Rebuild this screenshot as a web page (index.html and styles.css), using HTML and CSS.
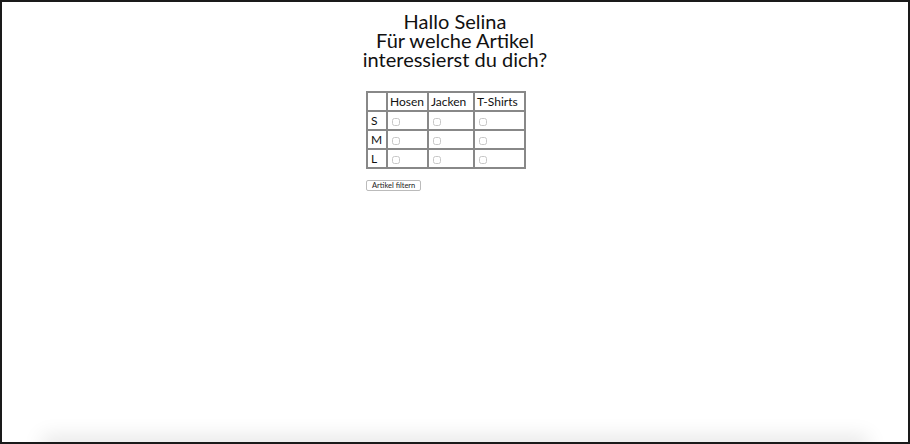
FILE: index.html
```html
<!DOCTYPE html>
<html lang="de">
<head>
  <meta charset="UTF-8" />
  <meta name="viewport" content="width=device-width, initial-scale=1.0"/>
  <title>Artikel</title>
  <link rel="stylesheet" href="styles.css">
</head>
<body>
  <div class="frame">
    <h1>Hallo Selina<br>Für welche Artikel<br>interessierst du dich?</h1>
    <form class="filter">
      <table class="sizes">
        <tr>
          <th class="size"></th>
          <th class="c1">Hosen</th>
          <th class="c2">Jacken</th>
          <th class="c3">T-Shirts</th>
        </tr>
        <tr>
          <td class="size">S</td>
          <td><input type="checkbox"></td>
          <td><input type="checkbox"></td>
          <td><input type="checkbox"></td>
        </tr>
        <tr>
          <td class="size">M</td>
          <td><input type="checkbox"></td>
          <td><input type="checkbox"></td>
          <td><input type="checkbox"></td>
        </tr>
        <tr>
          <td class="size">L</td>
          <td><input type="checkbox"></td>
          <td><input type="checkbox"></td>
          <td><input type="checkbox"></td>
        </tr>
      </table>
      <button type="button" class="btn">Artikel filtern</button>
    </form>
    <div class="shade"></div>
  </div>
</body>
</html>
```

FILE: styles.css
```css
html, body {
  margin: 0; padding: 0; background: #fff;
}
body {
  font-family: Lato, "DejaVu Sans", sans-serif; color: #111;
}
.frame {
  height: 444px; box-sizing: border-box; border: 2px solid #1a1a1a;
  position: relative; overflow: hidden;
}
h1 {
  font-size: 20px; font-weight: 400; line-height: 19px;
  text-align: center; margin: 10px 0 0;
}
.filter {
  width: 178px; margin: 22px auto 0;
}
.sizes {
  border-collapse: collapse; border: 2px solid #888;
}
.sizes th, .sizes td {
  border: 2px solid #888; font-size: 12px; font-weight: 400;
  height: 19px; padding: 0 2px; text-align: left; box-sizing: border-box;
}
.sizes .size { width: 20px; padding-left: 3px; }
.sizes .c1 { width: 41px; }
.sizes .c2 { width: 46px; }
.sizes .c3 { width: 51px; }
.sizes input {
  width: 8px; height: 8px; margin: 0 0 0 2px; vertical-align: middle;
  opacity: 0.4;
}
.btn {
  display: block; margin-top: 11px; font-family: inherit; font-size: 7.5px;
  color: #222; padding: 0 5px; background: #fff;
  border: 1px solid #bbb; border-radius: 2px;
}
.shade {
  position: absolute; left: 40px; right: 40px; bottom: -20px; height: 20px;
  box-shadow: 0 -6px 20px rgba(0, 0, 0, 0.1);
}
```
